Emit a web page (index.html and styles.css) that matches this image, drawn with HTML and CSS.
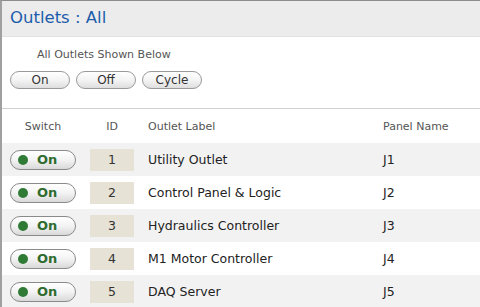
FILE: index.html
```html
<!DOCTYPE html>
<html lang="en">
  <head>
    <meta charset="UTF-8" />
    <title>Outlets : All</title>
    <link rel="stylesheet" href="styles.css">
  </head>
  <body>
    <main class="panel">
      <header class="panel-head">
        <h1>Outlets : All</h1>
      </header>

      <!-- Bulk controls -->
      <section class="bulk">
        <p class="bulk-text">All Outlets Shown Below</p>
        <div class="bulk-btns">
          <button class="pill">On</button>
          <button class="pill">Off</button>
          <button class="pill">Cycle</button>
        </div>
      </section>

      <!-- Outlet list -->
      <div class="outlets">
        <div class="row row-head">
          <span class="col-switch">Switch</span>
          <span class="col-id">ID</span>
          <span>Outlet Label</span>
          <span>Panel Name</span>
        </div>
        <div class="row">
          <span class="col-switch"><button class="switch"><i class="dot"></i>On</button></span>
          <span class="col-id"><b class="id-box">1</b></span>
          <span>Utility Outlet</span>
          <span>J1</span>
        </div>
        <div class="row">
          <span class="col-switch"><button class="switch"><i class="dot"></i>On</button></span>
          <span class="col-id"><b class="id-box">2</b></span>
          <span>Control Panel &amp; Logic</span>
          <span>J2</span>
        </div>
        <div class="row">
          <span class="col-switch"><button class="switch"><i class="dot"></i>On</button></span>
          <span class="col-id"><b class="id-box">3</b></span>
          <span>Hydraulics Controller</span>
          <span>J3</span>
        </div>
        <div class="row">
          <span class="col-switch"><button class="switch"><i class="dot"></i>On</button></span>
          <span class="col-id"><b class="id-box">4</b></span>
          <span>M1 Motor Controller</span>
          <span>J4</span>
        </div>
        <div class="row">
          <span class="col-switch"><button class="switch"><i class="dot"></i>On</button></span>
          <span class="col-id"><b class="id-box">5</b></span>
          <span>DAQ Server</span>
          <span>J5</span>
        </div>
      </div>
    </main>
  </body>
</html>
```

FILE: styles.css
```css
/* ---------- Reset & Base ---------- */
*{box-sizing:border-box;margin:0;padding:0;}
html,body{height:100%;font-family:"DejaVu Sans",Verdana,sans-serif;color:#222;background:#fff;overflow:hidden;}

/* ---------- Frame ---------- */
.panel{min-height:100%;border-top:1px solid #8c8c8c;border-left:2px solid #a0a0a0;}
.panel-head{height:36px;background:#ececec;border-bottom:1px solid #e2e2e2;padding:7px 0 0 8px;}
.panel-head h1{font-size:16.5px;font-weight:400;color:#1d5cab;line-height:20px;}

/* ---------- Bulk controls ---------- */
.bulk{padding:11px 0 0 8px;height:72px;border-bottom:1px solid #d0d0d0;}
.bulk-text{font-size:11px;color:#555;padding-left:27px;line-height:14px;}
.bulk-btns{display:flex;gap:6px;margin-top:9px;}
.pill{width:60px;height:18px;border:1px solid #9a9a9a;border-radius:9px;background:linear-gradient(#fff 0%,#f4f4f4 50%,#dedede 100%);font:12px "DejaVu Sans",Verdana,sans-serif;color:#333;line-height:15px;}

/* ---------- Outlet list ---------- */
.row{display:grid;grid-template-columns:80px 58px 235px 1fr;align-items:center;height:33px;padding-left:8px;font-size:12.5px;}
.row:nth-child(even){background:#f2f2f2;}
.row-head{height:34px;font-size:11px;color:#555;padding-top:1px;}
.col-switch{width:66px;text-align:center;}
.col-id{width:44px;text-align:center;}

.switch{display:flex;align-items:center;width:66px;height:20px;border:1px solid #8a8a8a;border-radius:10px;background:linear-gradient(#fff 0%,#f3f3f3 50%,#d9d9d9 100%);font:700 13px "DejaVu Sans",Verdana,sans-serif;color:#2f6b2f;padding-left:7px;gap:9px;}
.dot{display:block;width:10px;height:10px;border-radius:50%;background:#2f7a34;}
.id-box{display:block;height:22px;line-height:22px;background:#e6e2d6;font-weight:400;color:#333;}
```
